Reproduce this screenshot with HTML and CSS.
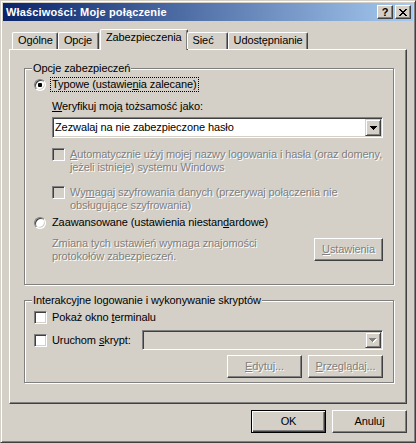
FILE: index.html
```html
<!DOCTYPE html>
<html lang="pl">
<head>
<meta charset="utf-8">
<title>Właściwości: Moje połączenie</title>
<link rel="stylesheet" href="styles.css">
</head>
<body>
<div class="window">
  <div class="titlebar">
    <span class="title">Właściwości: Moje połączenie</span>
    <div class="caption-btns">
      <span class="cbtn help">?</span>
      <span class="cbtn close"><svg width="8" height="7" viewBox="0 0 8 7" shape-rendering="crispEdges"><path fill="#000" d="M0 0h2v1H0zM6 0h2v1H6zM1 1h2v1H1zM5 1h2v1H5zM2 2h4v1H2zM3 3h2v1H3zM2 4h4v1H2zM1 5h2v1H1zM5 5h2v1H5zM0 6h2v1H0zM6 6h2v1H6z"/></svg></span>
    </div>
  </div>

  <div class="tabs">
    <span class="tab">Ogólne</span>
    <span class="tab">Opcje</span>
    <span class="tab active">Zabezpieczenia</span>
    <span class="tab">Sieć</span>
    <span class="tab">Udostępnianie</span>
  </div>

  <div class="panel">
    <fieldset class="group group-security">
      <legend>Opcje zabezpieczeń</legend>
      <div class="option">
        <span class="radio checked"></span>
        <span class="focus">Typowe (ustawie<u>n</u>ia zalecane)</span>
      </div>
      <div class="indent field-label"><u>W</u>eryfikuj moją tożsamość jako:</div>
      <div class="indent select">
        <span class="select-text">Zezwalaj na nie zabezpieczone hasło</span>
        <span class="drop-btn"><svg width="7" height="4" viewBox="0 0 7 4" shape-rendering="crispEdges"><path fill="#000" d="M0 0h7v1H0zM1 1h5v1H1zM2 2h3v1H2zM3 3h1v1H3z"/></svg></span>
      </div>
      <div class="indent check-row row-auto">
        <span class="checkbox disabled"></span>
        <span class="disabled-text"><u>A</u>utomatycznie użyj mojej nazwy logowania i hasła (oraz domeny,<br>jeżeli istnieje) systemu Windows</span>
      </div>
      <div class="indent check-row row-encrypt">
        <span class="checkbox disabled"></span>
        <span class="disabled-text">Wy<u>m</u>agaj szyfrowania danych (przerywaj połączenia nie<br>obsługujące szyfrowania)</span>
      </div>
      <div class="option option-adv">
        <span class="radio"></span>
        <span>Zaawansowane (ustawienia niestan<u>d</u>ardowe)</span>
      </div>
      <div class="indent adv-row">
        <span class="disabled-text">Zmiana tych ustawień wymaga znajomości<br>protokołów zabezpieczeń.</span>
        <span class="btn btn-settings disabled-text"><u>U</u>stawienia</span>
      </div>
    </fieldset>

    <fieldset class="group group-script">
      <legend>Interakcyjne logowanie i wykonywanie skryptów</legend>
      <div class="check-row row-terminal">
        <span class="checkbox"></span>
        <span>Pokaż okno <u>t</u>erminalu</span>
      </div>
      <div class="check-row row-script">
        <span class="checkbox"></span>
        <span>Uruchom <u>s</u>krypt:</span>
        <span class="combo">
          <span class="drop-btn"><svg width="8" height="5" viewBox="0 0 8 5" shape-rendering="crispEdges"><path fill="#fff" d="M1 1h7v1H1zM2 2h5v1H2zM3 3h3v1H3zM4 4h1v1H4z"/><path fill="#808080" d="M0 0h7v1H0zM1 1h5v1H1zM2 2h3v1H2zM3 3h1v1H3z"/></svg></span>
        </span>
      </div>
      <div class="btn-row">
        <span class="btn disabled-text"><u>E</u>dytuj...</span>
        <span class="btn disabled-text"><u>P</u>rzeglądaj...</span>
      </div>
    </fieldset>
  </div>

  <div class="footer">
    <span class="btn default">OK</span>
    <span class="btn">Anuluj</span>
  </div>
</div>
</body>
</html>
```

FILE: styles.css
```css
* { box-sizing: border-box; }
html, body { margin: 0; padding: 0; }
body {
  font-family: "Liberation Sans", Arial, sans-serif;
  font-size: 11px;
  line-height: 13px;
  letter-spacing: -0.1px;
  color: #000;
  background: #d4d0c8;
}
u { text-decoration: underline; text-underline-offset: 1px; }

.window {
  width: 416px;
  height: 443px;
  background: #d4d0c8;
  border: 1px solid;
  border-color: #d4d0c8 #404040 #404040 #d4d0c8;
  box-shadow: inset 1px 1px 0 #fff, inset -1px -1px 0 #808080;
  padding: 2px;
  display: flex;
  flex-direction: column;
}

/* title bar */
.titlebar {
  flex: none;
  height: 18px;
  display: flex;
  align-items: center;
  justify-content: space-between;
  padding: 0 2px 0 3px;
  background: linear-gradient(to right, #0a246a, #a6caf0);
  color: #fff;
}
.title { font-weight: bold; white-space: nowrap; letter-spacing: 0.15px; }
.caption-btns { display: flex; gap: 2px; }
.cbtn {
  width: 16px;
  height: 14px;
  display: flex;
  align-items: center;
  justify-content: center;
  background: #d4d0c8;
  border: 1px solid;
  border-color: #fff #404040 #404040 #fff;
  box-shadow: inset -1px -1px 0 #808080;
  color: #000;
  font-weight: bold;
  font-size: 11px;
  line-height: 12px;
  letter-spacing: 0;
}
.cbtn svg { display: block; }

/* tabs */
.tabs {
  flex: none;
  display: flex;
  align-items: flex-end;
  height: 20px;
  margin: 8px 0 0 9px;
  position: relative;
  z-index: 1;
}
.tab {
  height: 17px;
  min-width: 41px;
  padding: 1px 4px 0 5px;
  border: 1px solid;
  border-bottom: none;
  border-color: #fff #404040 #404040 #fff;
  box-shadow: inset -1px 0 0 #808080;
  border-radius: 2px 2px 0 0;
  background: #d4d0c8;
  white-space: nowrap;
}
.tab.active {
  height: 21px;
  margin: 0 -1px -1px 1px;
  padding: 1px 5px 0 5px;
}

/* panel */
.panel {
  flex: none;
  margin: 0 6px;
  border: 1px solid;
  border-color: #fff #404040 #404040 #fff;
  box-shadow: inset -1px -1px 0 #808080;
  padding: 12px 12px 20px 14px;
}

.group {
  margin: 0;
  min-width: 0;
  border: 1px solid #808080;
  box-shadow: inset 1px 1px 0 #fff, 1px 1px 0 #fff;
  padding: 3px 10px 21px 9px;
}
.group legend {
  padding: 0 1px;
  margin-left: -2px;
  background: #d4d0c8;
  line-height: 13px;
}

.option { display: flex; align-items: center; height: 13px; white-space: nowrap; }
.option-adv { margin-top: 4px; }
.focus { outline: 1px dotted #000; outline-offset: 0; padding: 0 1px; margin-left: -1px; }

.radio {
  flex: none;
  width: 12px;
  height: 12px;
  margin-right: 6px;
  border-radius: 50%;
  border: 1px solid;
  border-color: #808080 #fff #fff #808080;
  box-shadow: inset 1px 1px 0 #404040, inset -1px -1px 0 #d4d0c8;
  background: #fff;
  display: flex;
  align-items: center;
  justify-content: center;
}
.radio.checked::after {
  content: "";
  width: 4px;
  height: 4px;
  border-radius: 1px;
  background: #000;
}

.checkbox {
  flex: none;
  width: 13px;
  height: 13px;
  margin-right: 5px;
  border: 1px solid;
  border-color: #808080 #fff #fff #808080;
  box-shadow: inset 1px 1px 0 #404040, inset -1px -1px 0 #d4d0c8;
  background: #fff;
}
.checkbox.disabled { background: #d4d0c8; }

.indent { margin-left: 18px; }
.field-label { margin-top: 9px; }

.select {
  margin-top: 4px;
  height: 21px;
  display: flex;
  align-items: stretch;
  padding: 1px 1px 1px 2px;
  border: 1px solid;
  border-color: #808080 #fff #fff #808080;
  box-shadow: inset 1px 1px 0 #404040, inset -1px -1px 0 #d4d0c8;
  background: #fff;
}
.select-text { flex: 1; display: flex; align-items: center; white-space: nowrap; }
.drop-btn {
  flex: none;
  width: 16px;
  display: flex;
  align-items: center;
  justify-content: center;
  background: #d4d0c8;
  border: 1px solid;
  border-color: #d4d0c8 #404040 #404040 #d4d0c8;
  box-shadow: inset 1px 1px 0 #fff, inset -1px -1px 0 #808080;
}
.drop-btn svg { display: block; }

.check-row { display: flex; align-items: flex-start; white-space: nowrap; }
.row-auto { margin-top: 10px; }
.row-encrypt { margin-top: 12px; }

.disabled-text { color: #808080; text-shadow: 1px 1px 0 #fff; }

.adv-row {
  margin-top: 8px;
  display: flex;
  justify-content: space-between;
  align-items: flex-start;
  white-space: nowrap;
}

.btn {
  flex: none;
  width: 75px;
  height: 23px;
  display: flex;
  align-items: center;
  justify-content: center;
  background: #d4d0c8;
  border: 1px solid;
  border-color: #fff #404040 #404040 #fff;
  box-shadow: inset -1px -1px 0 #808080;
  white-space: nowrap;
}
.btn.default {
  border-color: #000;
  box-shadow: inset 1px 1px 0 #fff, inset -1px -1px 0 #404040, inset -2px -2px 0 #808080;
}
.btn-settings { width: 69px; margin-top: 1px; }

.group-script { margin-top: 9px; padding: 4px 10px 4px 9px; }
.row-terminal { align-items: center; height: 13px; }
.row-script { margin-top: 6px; height: 20px; align-items: center; }
.combo {
  margin-left: auto;
  width: 241px;
  height: 20px;
  display: flex;
  justify-content: flex-end;
  padding: 1px;
  border: 1px solid;
  border-color: #808080 #fff #fff #808080;
  box-shadow: inset 1px 1px 0 #404040, inset -1px -1px 0 #d4d0c8;
  background: #d4d0c8;
}
.btn-row { margin-top: 5px; display: flex; justify-content: flex-end; gap: 6px; }

.footer {
  flex: none;
  display: flex;
  justify-content: flex-end;
  gap: 6px;
  margin: 6px 6px 0 0;
}
```
